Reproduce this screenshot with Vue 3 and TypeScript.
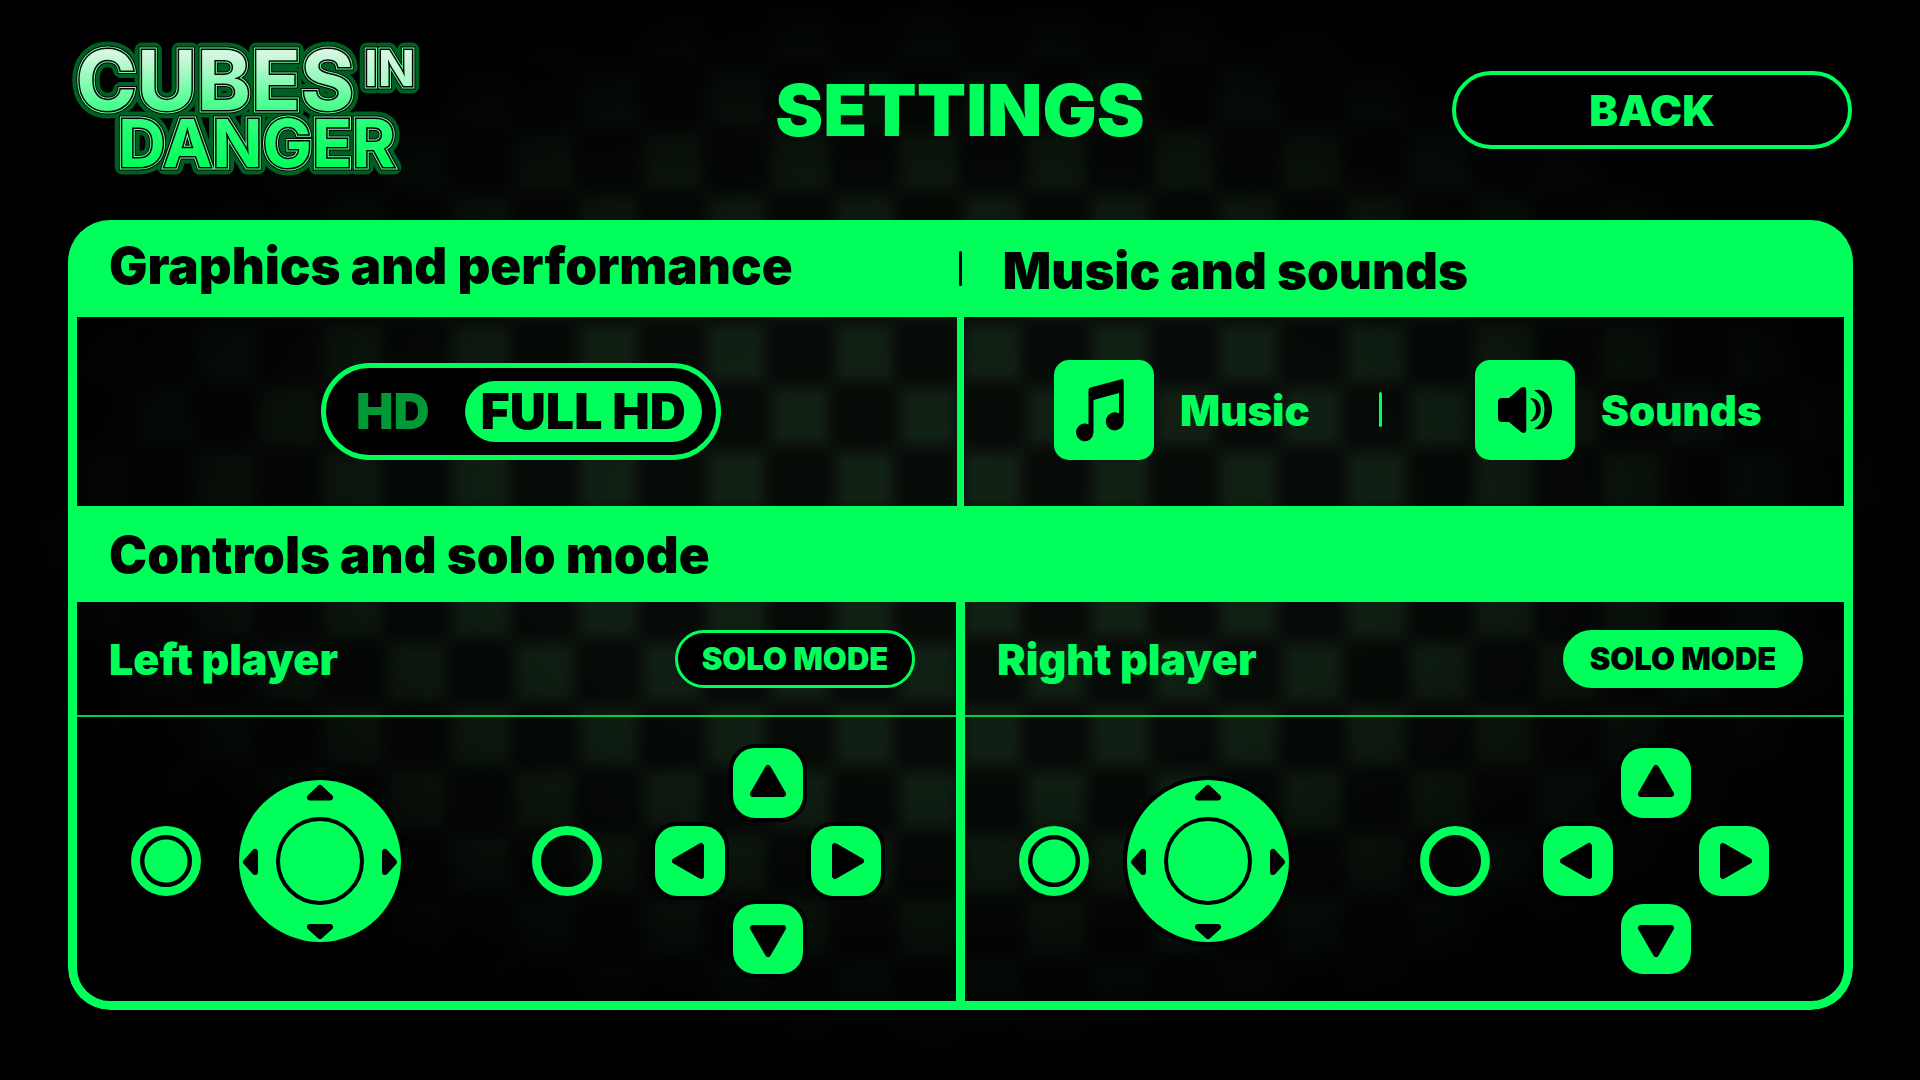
<script setup lang="ts">
import { ref } from 'vue'

type Resolution = 'HD' | 'FULL HD'
type Scheme = 'joystick' | 'arrows'

interface Player {
  id: string
  name: string
  solo: boolean
  scheme: Scheme
}

const resolutions: Resolution[] = ['HD', 'FULL HD']
const resolution = ref<Resolution>('FULL HD')
const musicOn = ref(true)
const soundsOn = ref(true)

const players = ref<Player[]>([
  { id: 'left', name: 'Left player', solo: false, scheme: 'joystick' },
  { id: 'right', name: 'Right player', solo: true, scheme: 'joystick' },
])

const arrows = [
  { dir: 'up', x: 82, y: 4, angle: 0 },
  { dir: 'left', x: 4, y: 82, angle: -90 },
  { dir: 'right', x: 160, y: 82, angle: 90 },
  { dir: 'down', x: 82, y: 160, angle: 180 },
]

const logoOutlines = ['halo', 'rim', 'line', 'edge']
</script>

<template>
  <div class="page">
    <svg class="backdrop" aria-hidden="true">
      <defs>
        <pattern id="cubes" width="128" height="128" patternUnits="userSpaceOnUse">
          <rect width="128" height="128" fill="#0c130d" />
          <rect x="68" y="4" width="56" height="56" fill="#060b07" />
          <rect x="4" y="68" width="56" height="56" fill="#060b07" />
          <rect x="7" y="7" width="51" height="51" fill="#112214" />
          <rect x="71" y="71" width="51" height="51" fill="#112214" />
        </pattern>
        <radialGradient id="fade">
          <stop offset="0" stop-color="#fff" />
          <stop offset="0.5" stop-color="#ddd" />
          <stop offset="0.75" stop-color="#777" />
          <stop offset="1" stop-color="#000" />
        </radialGradient>
        <mask id="vignette">
          <ellipse cx="50%" cy="48%" rx="49%" ry="50%" fill="url(#fade)" />
        </mask>
        <filter id="soften" color-interpolation-filters="sRGB"><feGaussianBlur stdDeviation="4" /></filter>
      </defs>
      <g mask="url(#vignette)">
        <rect width="100%" height="100%" fill="url(#cubes)" filter="url(#soften)" />
      </g>
    </svg>

    <header class="topbar">
      <svg class="logo" viewBox="0 0 360 140" role="img" aria-label="Cubes in Danger">
        <defs>
          <linearGradient id="pale" gradientUnits="userSpaceOnUse" x1="0" y1="12" x2="0" y2="72">
            <stop offset="0" stop-color="#d8f7e2" />
            <stop offset="1" stop-color="#3cff86" />
          </linearGradient>
          <linearGradient id="pale-small" gradientUnits="userSpaceOnUse" x1="0" y1="12" x2="0" y2="80">
            <stop offset="0" stop-color="#d8f7e2" />
            <stop offset="1" stop-color="#6fffa6" />
          </linearGradient>
          <linearGradient id="vivid" gradientUnits="userSpaceOnUse" x1="0" y1="80" x2="0" y2="128">
            <stop offset="0" stop-color="#2cff7a" />
            <stop offset="1" stop-color="#00ff5a" />
          </linearGradient>
        </defs>
        <use v-for="outline in logoOutlines" :key="outline" href="#wordmark" :class="outline" />
        <g id="wordmark">
          <text class="word-cubes" x="8" y="70">CUBES</text>
          <text class="word-in" x="296" y="46">IN</text>
          <text class="word-danger" x="50" y="127">DANGER</text>
        </g>
      </svg>
      <h1 class="title">SETTINGS</h1>
      <button class="back" type="button">BACK</button>
    </header>

    <main class="panel">
      <div class="band band-split">
        <h2>Graphics and performance</h2>
        <h2 class="band-second">Music and sounds</h2>
      </div>

      <div class="row">
        <section class="cell graphics" aria-label="Graphics and performance">
          <div class="switch">
            <button
              v-for="item in resolutions"
              :key="item"
              type="button"
              class="switch-item"
              :class="{ active: resolution === item }"
              :aria-pressed="resolution === item"
              @click="resolution = item"
            >{{ item }}</button>
          </div>
        </section>

        <section class="cell audio" aria-label="Music and sounds">
          <button class="sound" type="button" :aria-pressed="musicOn" @click="musicOn = !musicOn">
            <svg class="tile" viewBox="0 0 100 100" aria-hidden="true">
              <path d="M34.5 30q0-2 2-2.500L67.500 19.200q2.200-.5 2.200 1.500V61.500a9 9 0 1 1-4.700-8V33L39.500 40V72.500a8.800 8.800 0 1 1-5-8z" />
            </svg>
            <span>Music</span>
          </button>
          <button class="sound sound-second" type="button" :aria-pressed="soundsOn" @click="soundsOn = !soundsOn">
            <svg class="tile" viewBox="0 0 100 100" aria-hidden="true">
              <path d="M23 42q0-4 4-4h7L46 27.800Q51.300 25 51.300 31V69Q51.300 75 46 72L34 62h-7q-4 0-4-4z" />
              <path d="M55 38.500C60 37 65.800 42 65.800 49.500S60 62.500 55 61q6-4.500 6-11.500T55 38.500z" />
              <path d="M59 30.500C68 27 77 36 77 49.500S68 72 59 68.500Q69.500 64 69.500 49.500T59 30.500z" />
            </svg>
            <span>Sounds</span>
          </button>
        </section>
      </div>

      <div class="band">
        <h2>Controls and solo mode</h2>
      </div>

      <div class="row players">
        <section v-for="player in players" :key="player.id" class="cell player">
          <div class="player-head">
            <h3>{{ player.name }}</h3>
            <button
              type="button"
              class="solo"
              :class="{ active: player.solo }"
              :aria-pressed="player.solo"
              @click="player.solo = !player.solo"
            >SOLO MODE</button>
          </div>

          <div class="schemes">
            <label class="scheme scheme-stick">
              <input v-model="player.scheme" type="radio" :name="player.id" value="joystick" aria-label="Joystick" />
              <svg class="stick" viewBox="-85 -85 170 170" aria-hidden="true">
                <circle r="85" fill="#000" />
                <circle r="81" fill="#00ff5a" />
                <circle r="42" fill="none" stroke="#000" stroke-width="4" />
                <g class="hint">
                  <path d="M0-73L10-63.500H-10z" />
                  <path d="M0 75L10 66H-10z" />
                  <path d="M-74 1L-65-9V11z" />
                  <path d="M74 1L65-9V11z" />
                </g>
              </svg>
            </label>

            <label class="scheme scheme-arrows">
              <input v-model="player.scheme" type="radio" :name="player.id" value="arrows" aria-label="Arrow keys" />
              <svg class="pad" viewBox="0 0 234 234" aria-hidden="true">
                <g v-for="key in arrows" :key="key.dir" :transform="`translate(${key.x} ${key.y})`">
                  <rect x="-2" y="-2" width="74" height="74" rx="24" fill="#00ff5a" stroke="#000" stroke-width="4" />
                  <path class="key-arrow" d="M35 20L50 46H20z" :transform="`rotate(${key.angle} 35 35)`" />
                </g>
              </svg>
            </label>
          </div>
        </section>
      </div>
    </main>
  </div>
</template>

<style>
body {
  background: #000;
}
</style>

<style scoped>
.page {
  --green: #00ff5a;
  position: relative;
  box-sizing: border-box;
  min-height: 100vh;
  padding: 0 67px 70px 68px;
  background: #000;
  color: var(--green);
  font-family: Inter, "Noto Sans", sans-serif;
  font-weight: 900;
}

.backdrop {
  position: absolute;
  inset: 0;
  width: 100%;
  height: 100%;
}

h1,
h2,
h3 {
  margin: 0;
  font-weight: 900;
}

button {
  padding: 0;
  border: 0;
  background: none;
  color: inherit;
  font: inherit;
  cursor: pointer;
}

.topbar {
  position: relative;
  display: grid;
  grid-template-columns: 1fr auto 1fr;
  align-items: center;
  padding: 40px 1px 40px 0;
}

.logo {
  overflow: visible;
  width: 360px;
  height: 140px;
}

.logo text {
  font-weight: 700;
}

.word-cubes {
  fill: var(--paint, url(#pale));
  font-size: 82px;
}

.word-in {
  fill: var(--paint, url(#pale-small));
  font-size: 49px;
}

.word-danger {
  fill: var(--paint, url(#vivid));
  font-size: 66px;
}

.halo {
  --paint: #005f22;
  stroke: #005f22;
  stroke-width: 15px;
  stroke-linejoin: round;
}

.rim {
  --paint: #000;
  stroke: #000;
  stroke-width: 7px;
}

.line {
  stroke: #6dff9f;
  stroke-width: 5px;
}

.edge {
  stroke: #000;
  stroke-width: 3px;
}

.title {
  font-size: 72px;
  line-height: 80px;
}

.back {
  justify-self: end;
  width: 400px;
  height: 78px;
  border: 4px solid var(--green);
  border-radius: 39px;
  background: #000;
  font-size: 43px;
}

.panel {
  position: relative;
  overflow: hidden;
  border-radius: 42px;
}

.band {
  display: grid;
  align-items: center;
  min-height: 96px;
  padding: 2px 0 0 41px;
  box-sizing: border-box;
  background: var(--green);
  color: #000;
}

.band-split {
  grid-template-columns: 1fr 1fr;
  min-height: 97px;
  padding: 0;
}

.band h2 {
  font-size: 51px;
  line-height: 60px;
}

.band-split h2 {
  padding: 0 0 5px 41px;
}

.band-split .band-second {
  position: relative;
  padding: 4px 0 0 42px;
}

.band-second::before,
.sound-second::before {
  content: "";
  position: absolute;
  top: 50%;
  left: -2px;
  width: 3px;
  height: 35px;
  margin-top: -18px;
  border-radius: 2px;
  background: currentColor;
}

.row {
  display: grid;
  grid-template-columns: 1fr 1fr;
  gap: 7px;
  border: 0 solid var(--green);
  border-width: 0 9px;
  background: linear-gradient(var(--green), var(--green)) center / 7px 100% no-repeat;
}

.graphics {
  display: flex;
  align-items: center;
  justify-content: center;
  min-height: 188px;
  padding: 0 0 1px 8px;
}

.switch {
  display: flex;
  align-items: center;
  justify-content: space-between;
  box-sizing: border-box;
  width: 400px;
  height: 97px;
  padding: 0 14px;
  border: 5px solid var(--green);
  border-radius: 49px;
  background: #000;
}

.switch-item {
  height: 61px;
  padding: 0 16px;
  border-radius: 31px;
  opacity: 0.6;
  font-size: 50px;
  font-weight: 900;
  line-height: 61px;
  white-space: nowrap;
}

.switch-item.active {
  background: var(--green);
  color: #000;
  opacity: 1;
}

.audio {
  display: grid;
  grid-template-columns: 417fr 463fr;
  align-items: center;
  padding-bottom: 3px;
}

.sound {
  position: relative;
  display: flex;
  align-items: center;
  gap: 26px;
  padding-left: 90px;
  font-size: 42px;
}

.sound-second {
  padding-left: 94px;
}

.tile {
  width: 100px;
  height: 100px;
  border-radius: 15px;
  background: var(--green);
}

.players {
  gap: 9px;
  border-bottom-width: 9px;
  border-radius: 0 0 42px 42px;
  background-size: 9px 100%;
}

.player-head {
  display: flex;
  align-items: center;
  justify-content: space-between;
  min-height: 113px;
  padding: 0 41px 0 32px;
  border-bottom: 2px solid #00cf4a;
}

.player-head h3 {
  font-size: 43px;
}

.solo {
  box-sizing: border-box;
  width: 240px;
  height: 58px;
  border: 3px solid var(--green);
  border-radius: 29px;
  background: #000;
  font-size: 31px;
  font-weight: 900;
}

.solo.active {
  background: var(--green);
  color: #000;
}

.schemes {
  display: flex;
  align-items: center;
  justify-content: space-between;
  padding: 27px 71px 23px 54px;
}

.scheme {
  display: flex;
  align-items: center;
  cursor: pointer;
}

.scheme-stick {
  gap: 34px;
}

.scheme-arrows {
  gap: 49px;
}

.scheme input {
  display: grid;
  place-items: center;
  width: 70px;
  height: 70px;
  margin: 0;
  border: 9px solid var(--green);
  border-radius: 50%;
  appearance: none;
}

.scheme input:checked {
  background: radial-gradient(circle, var(--green) 21px, #000 22px);
}

.stick {
  width: 170px;
  height: 170px;
}

.pad {
  width: 234px;
  height: 234px;
}

.hint path {
  stroke: #000;
  stroke-width: 6px;
  stroke-linejoin: round;
}

.key-arrow {
  stroke: #000;
  stroke-width: 6px;
  stroke-linejoin: round;
}
</style>
